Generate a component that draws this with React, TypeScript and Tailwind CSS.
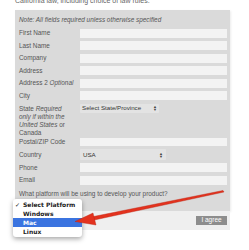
import React from "react";

type Row = { label: React.ReactNode; rowH: string };

const rows: Row[] = [
  { label: "First Name", rowH: "h-[12.5px]" },
  { label: "Last Name", rowH: "h-[12.5px]" },
  { label: "Company", rowH: "h-[12.5px]" },
  { label: "Address", rowH: "h-[12.5px]" },
  {
    label: (
      <>
        Address 2 <em>Optional</em>
      </>
    ),
    rowH: "h-[12.5px]",
  },
  { label: "City", rowH: "h-[12px]" },
];

function Arrows() {
  return (
    <span className="ml-auto flex flex-col items-center leading-none text-[#444]">
      <span className="text-[4px] leading-[3px]">▲</span>
      <span className="text-[4px] leading-[3px]">▼</span>
    </span>
  );
}

function Input() {
  return <div className="h-[9px] w-[147px] bg-[#f3f3f3]" />;
}

export default function App() {
  return (
    <div className="relative h-[250px] w-[249px] overflow-hidden bg-white font-['Liberation_Sans',Arial,sans-serif] text-[6.4px] text-[#555]">
      <div className="h-[10px] overflow-hidden pl-[15px]">
        <p className="-mt-[4px] text-[7px] text-[#666]">California law, including choice of law rules.</p>
      </div>

      <div className="ml-[15px] w-[215px] bg-[#dadada] pb-[2px] shadow-[1px_1px_2px_rgba(0,0,0,0.08)]">
        <div className="flex h-[17px] items-center pl-[4px] pt-[2px] italic">
          Note: All fields required unless otherwise specified
        </div>
        {rows.map((r, i) => (
          <div key={i} className={`flex items-center ${r.rowH}`}>
            <div className="w-[65px] pl-[4px]">{r.label}</div>
            <Input />
          </div>
        ))}

        <div className="flex h-[35px] pt-[2px]">
          <div className="w-[65px] pl-[4px] pt-[1px]">
            <div className="w-[48px] leading-[8px]">
              State <em>Required only if within the United States</em> or Canada
            </div>
          </div>
          <div className="flex h-[9px] w-[79px] items-center rounded-[1px] bg-[#e3e3e3] px-[2px] text-[6.2px] text-[#333]">
            <span>Select State/Province</span>
            <Arrows />
          </div>
        </div>

        <div className="flex h-[11px] items-center">
          <div className="w-[65px] pl-[4px]">Postal/ZIP Code</div>
          <div className="h-[8px] w-[147px] bg-[#f3f3f3]" />
        </div>

        <div className="flex h-[14px] items-center">
          <div className="w-[65px] pl-[4px]">Country</div>
          <div className="flex h-[11px] w-[86px] items-center rounded-[1px] bg-[#e3e3e3] px-[3px] text-[6.2px] text-[#333]">
            <span>USA</span>
            <Arrows />
          </div>
        </div>

        <div className="flex h-[12.5px] items-center">
          <div className="w-[65px] pl-[4px]">Phone</div>
          <Input />
        </div>
        <div className="flex h-[12.5px] items-center">
          <div className="w-[65px] pl-[4px]">Email</div>
          <Input />
        </div>
        <div className="h-[22px] pl-[4px] pt-[2px]">What platform will be using to develop your product?</div>
      </div>

      <div className="ml-[15px] flex h-[19px] w-[215px] items-center justify-end bg-[#efefef] pr-[3px]">
        <div className="flex h-[9px] w-[31px] items-center justify-center bg-[#8d8d8d] text-[6.5px] text-white">I agree</div>
      </div>

      <div className="absolute left-[13px] top-[199px] w-[69px] rounded-[3px] bg-white py-[1px] font-['DejaVu_Sans',sans-serif] text-[6px] font-semibold text-[#222] shadow-[0_2px_5px_rgba(0,0,0,0.35)]">
        <div className="flex h-[9px] items-center">
          <span className="w-[10px] pl-[2px]">✓</span>
          <span>Select Platform</span>
        </div>
        <div className="flex h-[9px] items-center pl-[10px]">Windows</div>
        <div className="flex h-[9px] items-center bg-[#3b74e0] pl-[10px] text-white">Mac</div>
        <div className="flex h-[9px] items-center pl-[10px]">Linux</div>
      </div>

      <svg className="pointer-events-none absolute left-0 top-0" width="249" height="250" viewBox="0 0 249 250">
        <polygon points="223,190.5 224,192 92,220.5 91,217" fill="#e3321e" stroke="#b8220f" strokeWidth="0.4" />
        <polygon points="75,221.5 93,213 96,225" fill="#e3321e" stroke="#b8220f" strokeWidth="0.4" />
      </svg>
    </div>
  );
}
